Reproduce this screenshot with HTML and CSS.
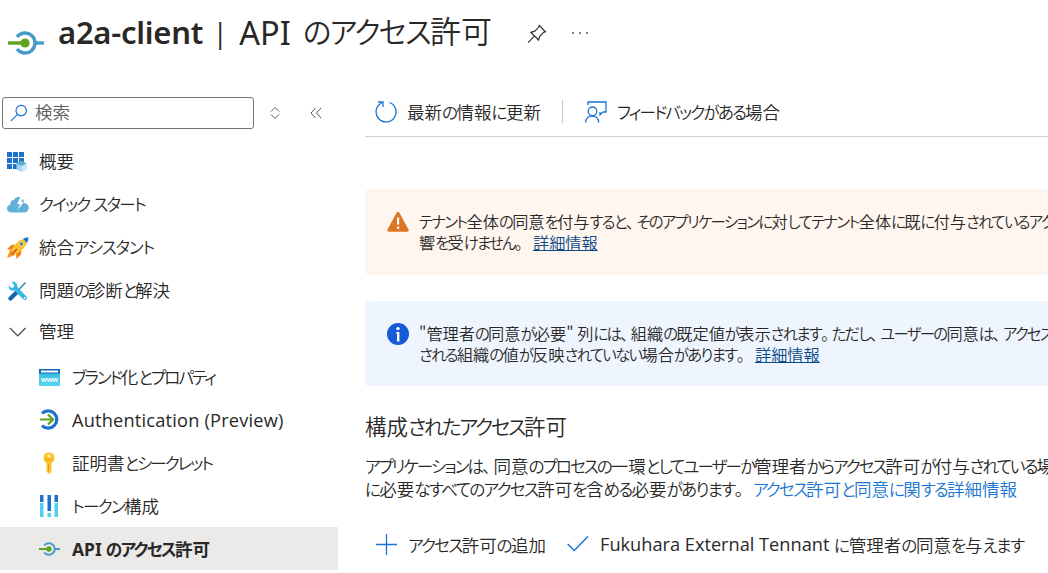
FILE: index.html
```html
<!DOCTYPE html>
<html lang="ja">
<head>
<meta charset="utf-8">
<title>a2a-client | API のアクセス許可</title>
<link rel="stylesheet" href="styles.css">
</head>
<body>
<svg class="defs" width="0" height="0">
  <symbol id="api" viewBox="0 0 36 24">
    <path d="M9 6A10 10 0 1 1 9 18" fill="none" stroke="#459bca" stroke-width="3.4"/>
    <path d="M27 12h9" stroke="#459bca" stroke-width="3.4"/>
    <path d="M0 12h17" stroke="#5ea321" stroke-width="3.4"/>
    <circle cx="17" cy="12" r="4.6" fill="#5ea321"/>
  </symbol>
</svg>
<div class="app">
  <header class="header">
    <svg class="api-logo" width="36" height="24"><use href="#api"/></svg>
    <h1 class="title"><b class="name">a2a-client</b><span class="bar">|</span><span class="latin">API</span><span data-w="189">のアクセス許可</span></h1>
    <svg class="pin" width="20" height="20" viewBox="0 0 20 20" fill="none" stroke="#333" stroke-width="1.2"><path d="M12.2 1.5 18.5 7.8 16.6 8.4 12.7 12.3 11.6 16 3.8 8.3 7.8 7.2 11.6 3.3ZM7.4 12.2 1 18.6"/></svg>
    <span class="more"><i></i><i></i><i></i></span>
  </header>
  <div class="body">
    <aside class="side">
      <div class="search-row">
        <div class="search">
          <svg width="18" height="18" viewBox="0 0 18 18" fill="none" stroke="#1a73d4" stroke-width="1.2"><circle cx="11.2" cy="6.6" r="5.2"/><path d="M7.5 10.3 1 16.8"/></svg>
          <span>検索</span>
        </div>
        <svg class="sort" width="10" height="14" viewBox="0 0 10 14" fill="none" stroke="#555"><path d="M1 5.5 5 1.5 9 5.5M1 8.5 5 12.5 9 8.5"/></svg>
        <svg class="collapse" width="12" height="12" viewBox="0 0 12 12" fill="none" stroke="#555"><path d="M5.5 1 1 6 5.5 11M11 1 6.500 6 11 11"/></svg>
      </div>
      <nav class="nav">
        <a class="item"><svg width="20" height="20" viewBox="0 0 20 20"><path fill="#1b70c8" d="M0 0h5v5H0zM6 0h5v5H6zM12 0h5v5h-5zM0 6h5v5H0zM6 6h5v5H6zM12 6h5v5h-5zM0 12h5v5H0zM6 12h5v5H6z"/><path fill="#9bd5ee" d="m14.500 9 5 2.500v6l-5 2.500-5-2.500v-6z"/><path fill="#5aaede" d="m14.500 9 5 2.500-5 2.500-5-2.500z"/><path fill="#c6e9f7" d="m14.500 14 5-2.500v6l-5 2.500z"/></svg><span>概要</span></a>
        <a class="item"><svg width="22" height="20" viewBox="0 0 22 20"><path fill="#60b0d9" d="M4.500 17.500C1.500 17.500 0 15.700 0 13.500S1.700 10 3.500 9.500C3 7 4.700 5 7 5c.6-2 2.200-3 4.500-3 3.500 0 5.700 2.500 5.500 6 3 .2 4.700 2.200 4.700 4.500 0 3-2 5-4.700 5z"/><path fill="#fff" d="M13.500 2 10 9h3l-2.500 6 6.500-8h-3l3-5z"/></svg><span data-w="106">クイック スタート</span></a>
        <a class="item"><svg width="22" height="22" viewBox="0 0 22 22"><path fill="#f58220" d="M8 7.500 4 8 0 12.500l5 .2zM14.500 13l-.5 4.500L9.500 22 9 16z"/><path fill="#f7941e" d="M3 13 0 21l8-3 1-5z"/><path fill="#fcc12c" d="M4.500 15C6 8 11 2.500 21 .5 20 10 14 15.500 7 17.500z"/><path fill="#1573cf" d="M16 1.800Q18.500.7 21.500.3q-.2 3-1.400 5.700z"/><circle cx="14.400" cy="7" r="2" fill="#2478cc" stroke="#ffe07b"/><path d="m5 17 5-5" stroke="#b94b25" stroke-width="1.300"/></svg><span data-w="115">統合アシスタント</span></a>
        <a class="item"><svg width="22" height="20" viewBox="-1 0 22 20"><path d="m17.500 1.500-9 9.500" stroke="#2c91c9" stroke-width="1.600"/><path d="m9 11-6.500 6.500" stroke="#1766ab" stroke-width="4.200" stroke-linecap="round"/><path fill="#35b9e3" d="M3.500 1c3-1 6.200 1 5.800 5l9.200 9.500q1.200 1.800-.3 3t-3-.2L6 9.300C2.800 10.200.3 8 .8 4.500L3.500 7l2.300-.7.500-2.300z"/><circle cx="16.600" cy="17" r="1" fill="#fff"/></svg><span data-w="131">問題の診断と解決</span></a>
        <a class="item group"><svg width="22" height="18" viewBox="-2 0 22 18" fill="none" stroke="#444" stroke-width="1.200"><path d="m1 5 7.800 8 7.700-8"/></svg><span>管理</span></a>
        <a class="item sub"><svg width="21" height="18" viewBox="0 0 21 18"><defs><linearGradient id="web" x2="0" y2="1"><stop stop-color="#32bce2"/><stop offset="1" stop-color="#55d5f2"/></linearGradient></defs><path fill="url(#web)" d="M0 4h21v14H0z"/><path fill="#1369b7" d="M0 1h21v4.500H0z"/><path fill="#fff" d="M2 2.500h17v2H2z"/><text class="www" x="2" y="13.500" textLength="17" lengthAdjust="spacingAndGlyphs">www</text></svg><span data-w="143">ブランド化とプロパティ</span></a>
        <a class="item sub"><svg width="22" height="21" viewBox="-1 0 22 21" fill="none" stroke-width="3.200"><path stroke="#1b73cb" d="M2 4.300A8.700 8.700 0 1 1 2 16.700"/><path stroke="#5ea321" stroke-width="2.200" d="M0 10.500h13M8 5.500l5 5-5 5"/></svg><span class="latin-nav">Authentication (Preview)</span></a>
        <a class="item sub"><svg width="20" height="22" viewBox="0 0 20 22"><path fill="#fcc42e" d="M10 .5c3.500 0 5.500 2 5.500 5.500 0 2.500-1.200 4-3 5.200V20L10 22l-2.500-2.200V11C5.700 10 4.500 8.500 4.500 6 4.500 2.500 6.500.5 10 .5"/><circle cx="10" cy="3.800" r="1.500" fill="#fff1b3"/><path stroke="#e7941d" d="M6.500 8h7M9.500 12v7"/></svg><span data-w="140">証明書とシークレット</span></a>
        <a class="item sub"><svg width="21" height="22" viewBox="-1 0 21 22"><path fill="#1b73cb" d="M0 0h3.500v7H0zM7.500 0H11v16H7.500zM14.500 0H18v7h-3.500z"/><path fill="#50d0ef" d="M0 8h3.500v14H0zM7.500 18H11v4H7.500zM14.500 8H18v14h-3.500z"/></svg><span data-w="87">トークン構成</span></a>
        <a class="item sub active"><svg width="21" height="14"><use href="#api"/></svg><b data-w="138"><span class="api">API</span> のアクセス許可</b></a>
      </nav>
    </aside>
    <main class="main">
      <div class="toolbar">
        <svg width="22" height="22" viewBox="0 0 22 22" fill="none" stroke="#1a73d4" stroke-width="1.300"><path d="M6.500 2A10 10 0 1 0 14.500 1.500M3 1h5v5"/></svg>
        <span data-w="134">最新の情報に更新</span>
        <i class="divider"></i>
        <svg class="feedback" width="22" height="22" viewBox="0 0 22 22" fill="none" stroke="#1a73d4" stroke-width="1.300"><path d="M3 4V1h18v10h-3l-3 3v-3M.7 21.500c0-4 2.700-6.500 6.500-6.500s6.500 2.500 6.500 6.500"/><circle cx="7.500" cy="10.300" r="4.300"/></svg>
        <span data-w="163">フィードバックがある場合</span>
      </div>
      <section class="notice warn">
        <svg width="22" height="22" viewBox="0 0 22 22"><path fill="#db7720" d="M9.600 1.700q1.400-2 2.800 0l9.200 17q.8 2-1.400 2H1.800q-2.200 0-1.400-2z"/><path fill="#fff" d="M10 6.500h2.200v7H10zM10 15.500h2.200v2.200H10z"/></svg>
        <p><span data-w="634">テナント全体の同意を付与すると、そのアプリケーションに対してテナント全体に既に付与されているアク</span><br><span data-w="106">響を受けません。</span><a class="more-link">詳細情報</a></p>
      </section>
      <section class="notice info">
        <svg width="22" height="22" viewBox="0 0 22 22"><circle cx="11" cy="11" r="11" fill="#155bd6"/><circle cx="11" cy="5.600" r="1.700" fill="#fff"/><path fill="#fff" d="M9.200 9h3.200v9.500H10v-8h-.8z"/></svg>
        <p><span data-w="633">"管理者の同意が必要" 列には、組織の既定値が表示されます。ただし、ユーザーの同意は、アクセス</span><br><span data-w="328">される組織の値が反映されていない場合があります。</span><a class="more-link">詳細情報</a></p>
      </section>
      <h2 class="heading"><span data-w="202">構成されたアクセス許可</span></h2>
      <p class="desc"><span data-w="689">アプリケーションは、同意のプロセスの一環としてユーザーか管理者からアクセス許可が付与されている場</span><br><span data-w="381">に必要なすべてのアクセス許可を含める必要があります。</span><a class="doc-link" data-w="264">アクセス許可と同意に関する詳細情報</a></p>
      <div class="commands">
        <svg width="21" height="21" viewBox="0 0 21 21" stroke="#1a73d4" stroke-width="1.300"><path d="M0 10.500h21M10.500 0v21"/></svg>
        <span class="add" data-w="138">アクセス許可の追加</span>
        <svg class="check" width="22" height="18" viewBox="0 0 22 18" fill="none" stroke="#1a73d4" stroke-width="1.500"><path d="m.7 9 6.500 6.500L21 1.500"/></svg>
        <span class="tenant">Fukuhara External Tennant</span><span data-w="190">に管理者の同意を与えます</span>
      </div>
    </main>
  </div>
</div>
<script src="kana.js"></script>
</body>
</html>
```
FILE: kana.js
```js
// Sets kana tighter than kanji, so that each label has the width in its data-w.
const KANA = /([\u3041-\u30ff]+|[、。]+)/;

for (const label of document.querySelectorAll('[data-w]')) {
  let count = 0;
  for (const node of [...label.childNodes]) {
    if (node.nodeType !== Node.TEXT_NODE) continue;
    const parts = node.textContent.split(KANA).filter(Boolean).map((part) => {
      if (!KANA.test(part)) return document.createTextNode(part);
      const run = document.createElement('span');
      run.className = /[、。]/.test(part) ? 'punct' : 'kana';
      run.textContent = part;
      if (run.className === 'kana') count += part.length;
      return run;
    });
    node.replaceWith(...parts);
  }
  const width = label.getBoundingClientRect().width;
  label.style.setProperty('--kern', `${(Number(label.dataset.w) - width) / count}px`);
}
```
FILE: styles.css
```css
* { box-sizing: border-box; }
body {
  margin: 0;
  background: #fff;
  color: #292827;
  font-family: "Noto Sans CJK JP", sans-serif;
  font-weight: 350;
  font-size: 17.5px;
  font-feature-settings: "palt";
  overflow: hidden;
}
.kana { font-size: .95em; letter-spacing: var(--kern, 0); }
.punct { letter-spacing: .15em; }
.defs { display: block; height: 0; }
.app { width: 1048px; height: 573px; overflow: hidden; display: flex; flex-direction: column; }
svg { flex: none; display: block; }
.header { height: 87px; flex: none; display: flex; align-items: flex-start; padding-left: 8px; }
.api-logo { margin-top: 31px; }
.title { margin: 0 0 0 14px; height: 64px; line-height: 65px; width: 434px; display: flex; font-weight: 350; font-size: 31px; white-space: nowrap; }
.title > [data-w] { line-height: 60px; }
.name { font-family: "Noto Sans", sans-serif; font-weight: 600; font-size: 31px; width: 155px; letter-spacing: -.25px; }
.bar { width: 27px; font-family: "Open Sans", sans-serif; font-weight: 400; font-size: 28px; }
.latin { font-family: "Noto Sans", sans-serif; font-weight: 400; font-size: 32.5px; width: 64px; }
.pin { margin: 24px 0 0 35px; }
.more { display: flex; gap: 5px; margin: 32px 0 0 25px; }
.more i { width: 2px; height: 2px; background: #555; border-radius: 1px; }
.body { display: flex; flex: 1; }
.side { width: 338px; flex: none; }
.search-row { display: flex; align-items: center; padding: 10px 0 0 2px; }
.search { width: 252px; height: 32px; border: 1px solid #77756f; border-radius: 3px; display: flex; align-items: center; gap: 7px; padding-left: 7px; color: #605e5c; line-height: 28px; }
.search span { padding-bottom: 2px; }
.sort { margin-left: 16px; }
.collapse { margin-left: 30px; }
.nav { padding-top: 11px; }
.item { height: 43px; display: grid; grid-template-columns: 32px max-content; align-items: center; padding-left: 7px; white-space: nowrap; }
.item > :last-child { padding-bottom: 2px; }
.item.sub { padding-left: 39px; grid-template-columns: 33px max-content; }
.item.sub > :last-child { padding-bottom: 0; }
.item.group { padding-bottom: 4px; }
.item.active { background: #ebeae9; }
.www { font: bold 7px "Liberation Sans", sans-serif; fill: #fff; }
.latin-nav, .tenant { font-family: "Open Sans", sans-serif; font-size: 18.2px; font-weight: 400; }
.latin-nav { letter-spacing: .2px; }
.active b { font-weight: 700; }
.api { font-family: "Noto Sans", sans-serif; }
.main { flex: 1; min-width: 0; margin-left: 27px; white-space: nowrap; }
.toolbar { height: 50px; border-bottom: 1px solid #d2d0ce; display: flex; align-items: center; padding-left: 10px; }
.toolbar span[data-w] { margin-left: 10px; padding-bottom: 1px; }
.divider { width: 1px; height: 23px; margin: 0 22px 0 21px; background: #c8c6c4; }
.notice { height: 86px; display: flex; gap: 10px; padding: 22px 0 0 22px; border-radius: 4px 0 0 4px; font-size: 16.2px; line-height: 21px; }
.notice p { margin: 0; }
.warn { margin-top: 52px; background: #fff6f0; }
.info { margin-top: 26px; height: 85px; background: #eff5fe; }
.more-link { color: #0b4a87; text-decoration: underline; margin-left: 8px; }
.heading { margin: 26px 0 0; font-size: 21.5px; font-weight: 350; line-height: 28px; }
.desc { margin: 14px 0 0; line-height: 23px; }
.desc > :nth-child(n) { line-height: 20px; }
.doc-link { color: #1976d2; margin-left: 7px; }
.commands { display: flex; align-items: center; height: 26px; margin: 31px 0 0 11px; }
.commands span[data-w], .tenant { padding-bottom: 0; }
.add { margin-left: 11px; }
.check { margin-left: 21px; }
.tenant { margin-left: 11px; width: 234px; letter-spacing: 0; }
```
